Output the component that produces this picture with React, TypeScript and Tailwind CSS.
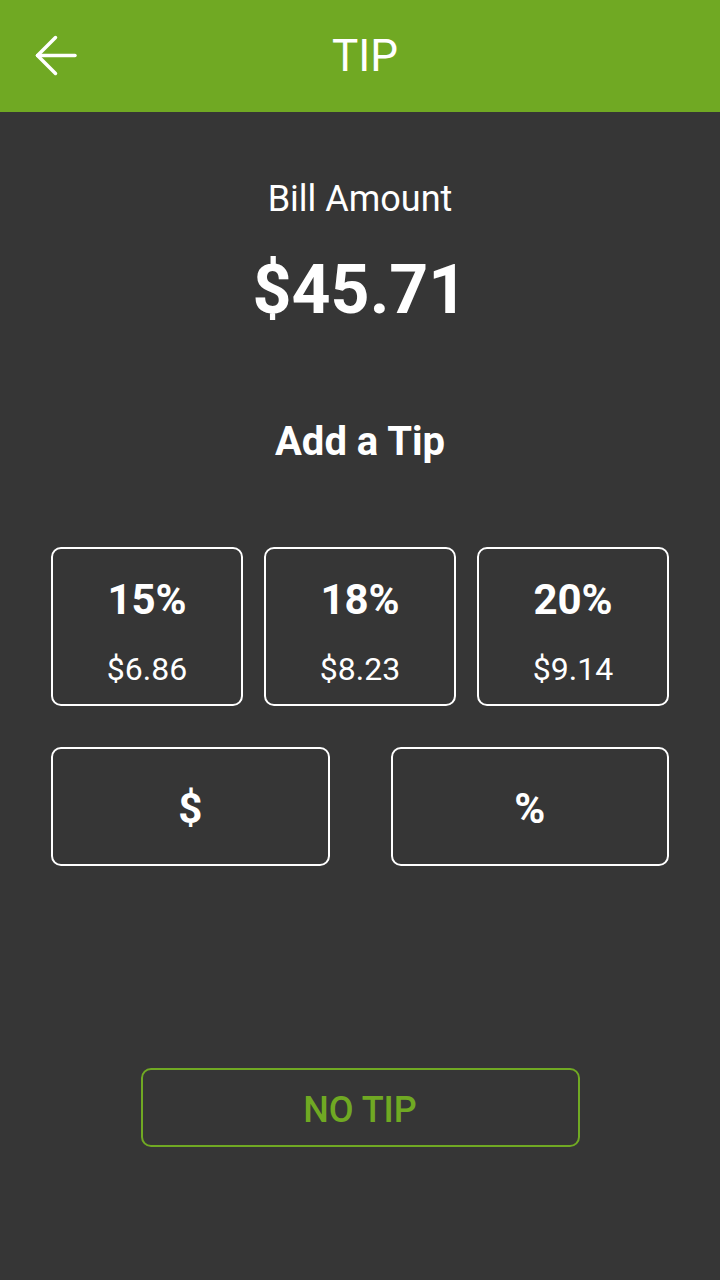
const tips = [
  { pct: "15%", amount: "$6.86" },
  { pct: "18%", amount: "$8.23" },
  { pct: "20%", amount: "$9.14" },
];

function BackArrow() {
  return (
    <svg width="48" height="48" viewBox="0 0 48 48" fill="none" stroke="white" strokeWidth="3.5" strokeLinecap="round" strokeLinejoin="round">
      <path d="M5.5 23.5H43" />
      <path d="M23.5 5.5L5.5 23.5L23.5 41.5" />
    </svg>
  );
}

export default function App() {
  return (
    <div className="w-[720px] h-[1280px] bg-[#363636] text-white flex flex-col" style={{ fontFamily: "Roboto, 'Noto Sans', sans-serif" }}>
      <header className="h-[112px] bg-[#70a923] relative flex items-center justify-center shrink-0">
        <button className="absolute left-[32px] top-[32px]">
          <BackArrow />
        </button>
        <h1 className="text-[44px] leading-none font-normal ml-[10px]">TIP</h1>
      </header>

      <div className="flex flex-col items-center">
        <p className="mt-[69px] text-[36px] leading-none">Bill Amount</p>
        <p className="mt-[39px] text-[68px] leading-none font-bold">$45.71</p>
        <p className="mt-[98px] text-[40px] leading-none font-bold">Add a Tip</p>
      </div>

      <div className="px-[51px] mt-[85px]">
        <div className="grid grid-cols-3 gap-[21px]">
          {tips.map((t) => (
            <button key={t.pct} className="h-[159px] border-2 border-white rounded-[10px] flex flex-col items-center pt-[30px]">
              <span className="text-[42px] leading-none font-bold">{t.pct}</span>
              <span className="mt-[32px] text-[32px] leading-none">{t.amount}</span>
            </button>
          ))}
        </div>

        <div className="grid grid-cols-2 gap-[61px] mt-[41px]">
          <button className="h-[119px] border-2 border-white rounded-[10px] flex items-center justify-center text-[42px] leading-none font-bold pt-[5px]">$</button>
          <button className="h-[119px] border-2 border-white rounded-[10px] flex items-center justify-center text-[42px] leading-none font-bold pt-[5px]">%</button>
        </div>
      </div>

      <div className="flex justify-center mt-[202px]">
        <button className="w-[439px] h-[79px] border-2 border-[#70a923] rounded-[10px] flex items-center justify-center text-[36px] leading-none font-medium text-[#70a923] pt-[4px]">
          NO TIP
        </button>
      </div>
    </div>
  );
}
